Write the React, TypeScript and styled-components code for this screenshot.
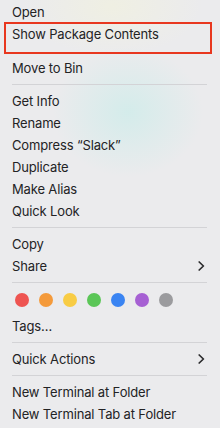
import * as React from "react";
import styled, { createGlobalStyle } from "styled-components";

const GlobalStyle = createGlobalStyle`
  html, body {
    margin: 0;
    padding: 0;
    background: #ebebed;
  }
  * {
    box-sizing: border-box;
  }
`;

const Menu = styled.div`
  position: relative;
  width: 220px;
  height: 428px;
  overflow: hidden;
  display: flex;
  flex-direction: column;
  padding-top: 1px;
  font-family: Inter, "Noto Sans", sans-serif;
  font-size: 13px;
  letter-spacing: -0.15px;
  color: #232325;
  background:
    radial-gradient(ellipse 75px 65px at 128px 112px, rgba(206, 236, 234, 0.8), rgba(206, 236, 234, 0) 100%),
    radial-gradient(ellipse 90px 50px at 112px 6px, rgba(241, 241, 222, 0.7), rgba(241, 241, 222, 0) 100%),
    #ebebed;
`;

const Item = styled.div<{ $gapAfter?: number }>`
  position: relative;
  height: 22px;
  line-height: 22px;
  padding: 0 15px 0 12px;
  display: flex;
  align-items: center;
  justify-content: space-between;
  white-space: nowrap;
  margin-bottom: ${(p) => p.$gapAfter ?? 0}px;
`;

const Marked = styled(Item)`
  &::after {
    content: "";
    position: absolute;
    top: -1px;
    left: 4px;
    right: 8px;
    height: 28px;
    border: 2px solid #e8371f;
  }
`;

const Separator = styled.div`
  height: 1px;
  margin: 5px 13px 5px 12px;
  background: #d3d3d6;
`;

const TagRow = styled.div`
  display: flex;
  gap: 10px;
  padding: 5px 0 8px 15px;
`;

const Dot = styled.span<{ $color: string }>`
  width: 14px;
  height: 14px;
  border-radius: 50%;
  background: ${(p) => p.$color};
`;

const Chevron = () => (
  <svg width="7" height="10" viewBox="0 0 7 10">
    <polyline
      points="1.2,1 5.4,5 1.2,9"
      fill="none"
      stroke="#2b2b2d"
      strokeWidth="1.7"
      strokeLinecap="round"
      strokeLinejoin="round"
    />
  </svg>
);

const tagColors = [
  "#ee5451",
  "#f49a3b",
  "#f8cc45",
  "#5bc657",
  "#3a84f2",
  "#a660d3",
  "#9b9b9e",
];

export default function App() {
  return (
    <Menu>
      <GlobalStyle />
      <Item>Open</Item>
      <Marked $gapAfter={12}>Show Package Contents</Marked>
      <Item>Move to Bin</Item>
      <Separator />
      <Item>Get Info</Item>
      <Item>Rename</Item>
      <Item>Compress “Slack”</Item>
      <Item>Duplicate</Item>
      <Item>Make Alias</Item>
      <Item>Quick Look</Item>
      <Separator />
      <Item>Copy</Item>
      <Item>
        Share
        <Chevron />
      </Item>
      <Separator />
      <TagRow>
        {tagColors.map((c) => (
          <Dot key={c} $color={c} />
        ))}
      </TagRow>
      <Item>Tags…</Item>
      <Separator />
      <Item>
        Quick Actions
        <Chevron />
      </Item>
      <Separator />
      <Item>New Terminal at Folder</Item>
      <Item>New Terminal Tab at Folder</Item>
    </Menu>
  );
}
